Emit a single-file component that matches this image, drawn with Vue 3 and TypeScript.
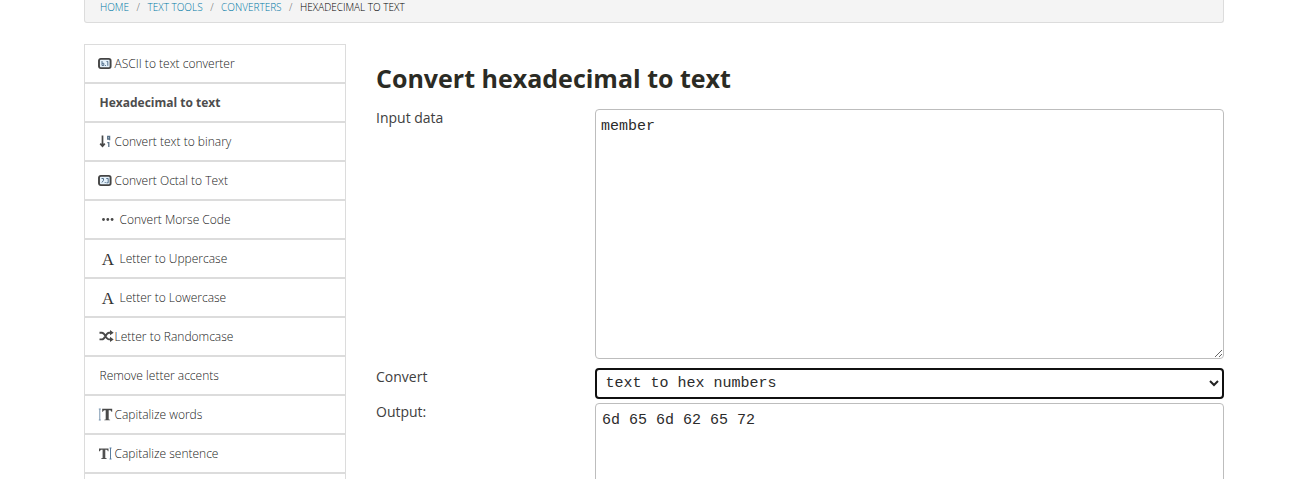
<script setup lang="ts">
import { ref } from 'vue'

interface ToolLink {
  label: string
  icon?: string
  wide?: boolean
  active?: boolean
}

const crumbs: string[] = ['Home', 'Text tools', 'Converters', 'Hexadecimal to text']

const tools: ToolLink[] = [
  { label: 'ASCII to text converter', icon: 'ascii' },
  { label: 'Hexadecimal to text', active: true },
  { label: 'Convert text to binary', icon: 'binary' },
  { label: 'Convert Octal to Text', icon: 'octal' },
  { label: 'Convert Morse Code', icon: 'morse', wide: true },
  { label: 'Letter to Uppercase', icon: 'letter', wide: true },
  { label: 'Letter to Lowercase', icon: 'letter', wide: true },
  { label: 'Letter to Randomcase', icon: 'shuffle' },
  { label: 'Remove letter accents' },
  { label: 'Capitalize words', icon: 'words' },
  { label: 'Capitalize sentence', icon: 'sentence' },
  { label: '' },
]

const input = ref('member')
const output = ref('6d 65 6d 62 65 72')
const mode = ref('text to hex numbers')
</script>

<template>
  <div class="page">
    <nav class="crumbs">
      <template v-for="(c, i) in crumbs" :key="c">
        <span v-if="i > 0" class="sep">/</span>
        <a :class="{ current: i === crumbs.length - 1 }">{{ c }}</a>
      </template>
    </nav>
    <div class="columns">
      <ul class="side">
        <li v-for="(t, i) in tools" :key="i" :class="{ active: t.active }">
          <span v-if="t.icon" class="icon" :class="{ wide: t.wide }">
            <svg v-if="t.icon === 'ascii' || t.icon === 'octal'" width="14" height="13" viewBox="0 0 14 13">
              <rect x="1" y="1.9" width="11.6" height="9.2" rx="1.8" fill="#e4f1fb" stroke="#444" stroke-width="1.9" />
              <path v-if="t.icon === 'ascii'" d="M4 4v4.5h1.8V6.3H4M7.4 8v1M8.5 4.5h1.3v4.3" fill="none" stroke="#55718c" stroke-width="1" />
              <path v-else d="M3.5 4.5h2v1.8L3.900 8.500M7.200 8v1M8.300 4.500h1.900v4.300H8.500" fill="none" stroke="#55718c" stroke-width="1" />
            </svg>
            <svg v-else-if="t.icon === 'binary'" width="14" height="13" viewBox="0 0 14 13">
              <path d="M4.500 .5v10.500M2.200 8.700l2.300 2.500 2.300-2.500" fill="none" stroke="#484848" stroke-width="1.7" />
              <path d="M11.500 4H9.700V1.500h1.900v3.700M9.300 7.700h1.500v4.300" fill="none" stroke="#587086" stroke-width="1.3" />
            </svg>
            <svg v-else-if="t.icon === 'morse'" width="18" height="13" viewBox="0 0 18 13">
              <g fill="#484848"><circle cx="5.5" cy="6.5" r="1.4" /><circle cx="9.8" cy="6.5" r="1.4" /><circle cx="14.1" cy="6.5" r="1.4" /></g>
            </svg>
            <span v-else-if="t.icon === 'letter'" class="glyph">A</span>
            <svg v-else-if="t.icon === 'shuffle'" class="shuffle" width="15" height="13" viewBox="0 0 15 13">
              <path d="M.5 2.700h2.400C6.500 2.700 6.500 9.400 10 9.400h2M.5 9.400h2.400C6.500 9.400 6.500 2.700 10 2.700h2" fill="none" stroke="#484848" stroke-width="1.9" />
              <path d="M11 .1 14.700 2.700 11 5.300zM11 6.800l3.700 2.600L11 12z" fill="#484848" />
            </svg>
            <svg v-else-if="t.icon === 'words'" width="15" height="13" viewBox="0 0 15 13">
              <path d="M1.800 1v11M.8 1h2M.8 12h2" stroke="#7894ae" stroke-width="1" />
              <path d="M4.200.7h10v3h-.8c-.3-1.200-.8-1.500-2.700-1.500v9.300l1.400.3v.5H6.300v-.5l1.400-.3V2.200C5.800 2.200 5.300 2.500 5 3.700h-.8z" fill="#484848" />
            </svg>
            <svg v-else width="15" height="13" viewBox="0 0 15 13">
              <path d="M1 1.500h9.500v2.800h-.7c-.2-1.200-.7-1.600-2.500-1.600v8.300l1.300.3v.6H3.300v-.6l1.300-.3V2.700c-1.800 0-2.300.4-2.600 1.600H1z" fill="#505050" />
              <path d="M12.500 1v11M11.500 1h2M11.500 12h2" stroke="#587da0" />
            </svg>
          </span>
          <span class="label">{{ t.label }}</span>
        </li>
      </ul>
      <main>
        <h1>Convert hexadecimal to text</h1>
        <div class="row input-row">
          <label>Input data</label>
          <div class="field"><textarea v-model="input" class="box source" spellcheck="false"></textarea></div>
        </div>
        <div class="row select-row">
          <label>Convert</label>
          <div class="field select">
            <select v-model="mode"><option>text to hex numbers</option></select>
            <svg class="arrow" width="10" height="7" viewBox="0 0 10 7"><path d="M1 1l4 4 4-4" fill="none" stroke="#222" stroke-width="2" /></svg>
          </div>
        </div>
        <div class="row">
          <label>Output:</label>
          <div class="field"><textarea v-model="output" class="box result" spellcheck="false"></textarea></div>
        </div>
      </main>
    </div>
  </div>
</template>

<style>
html, body { margin: 0; overflow: hidden; background: #fff; }
</style>

<style scoped>
* { box-sizing: border-box; }
.page {
  width: 1140px;
  height: 479px;
  margin-left: 84px;
  overflow: hidden;
  font-family: "Open Sans", sans-serif;
}
.crumbs {
  height: 23px;
  padding: 0 0 0 15px;
  display: flex;
  border: 1px solid #dcdcdc;
  border-top: 0;
  border-radius: 0 0 3px 3px;
  background: #f4f4f4;
  font-size: 10px;
  font-weight: 300;
  line-height: 15px;
  text-transform: uppercase;
  white-space: nowrap;
}
.crumbs a { color: #0079a6; }
.crumbs a.current { color: #000; }
.sep { width: 18.5px; text-align: center; color: #666; }
.columns { display: flex; margin-top: 21px; }
.side { width: 262px; margin: 0; padding: 0; list-style: none; flex: none; }
.side li {
  height: 39px;
  padding-left: 14px;
  display: flex;
  align-items: center;
  border: 1px solid #dcdcdc;
  font-size: 12px;
  font-weight: 300;
  line-height: 18px;
  color: #222;
  white-space: nowrap;
}
.side .active { font-weight: 700; color: #4d4d4d; }
.label { margin-left: .5px; }
.icon { width: 16px; height: 13px; margin-left: -1px; display: flex; flex: none; }
.icon.wide { width: 21px; }
.icon svg { display: block; flex: none; }
.icon .shuffle { margin-left: 1px; }
.glyph {
  width: 20px;
  text-align: center;
  font: 17px/15px "Liberation Serif", serif;
  color: #333;
}
main { width: 848px; margin-left: 30px; flex: none; }
h1 {
  height: 65px;
  margin: 0;
  padding-top: 17px;
  font-size: 25px;
  line-height: 35px;
  font-weight: 700;
  color: #2b2b24;
  white-space: nowrap;
}
.row { display: flex; }
.input-row { height: 259px; }
.select-row { height: 35px; }
.row label {
  width: 219px;
  flex: none;
  font-size: 14px;
  line-height: 18px;
  color: #404040;
}
.field { width: 629px; flex: none; }
.box {
  display: block;
  width: 100%;
  margin: 0;
  border: 1px solid #bdbdbd;
  border-radius: 4px;
  outline: 0;
  background: #fff;
  color: #2b2b2b;
  font: 15px/20px "Liberation Mono", monospace;
}
.source { height: 250px; padding: 7px 5px; resize: vertical; }
.result { height: 250px; padding: 7px 6px; resize: none; }
.select { position: relative; height: 31px; }
select {
  appearance: none;
  width: 100%;
  height: 31px;
  margin: 0;
  padding: 0 8.5px;
  border: 2px solid #101010;
  border-radius: 4px;
  outline: 0;
  background: #fff;
  color: #2b2b2b;
  font: 15px "Liberation Mono", monospace;
}
.arrow { position: absolute; right: 5px; top: 12px; }
</style>
